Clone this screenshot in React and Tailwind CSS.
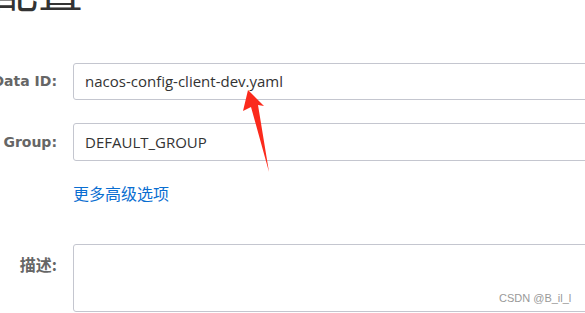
export default function App() {
  const font = { fontFamily: '"Open Sans", "Noto Sans CJK SC", sans-serif' }
  const cjk = { fontFamily: '"Noto Sans CJK SC", sans-serif' }
  const lbl = { fontFamily: '"DejaVu Sans", "Noto Sans CJK SC", sans-serif' }
  return (
    <div className="relative w-[585px] h-[313px] overflow-hidden bg-white" style={font}>
      <h1 className="-ml-[97px] -mt-[37px] h-[52px] text-[45px] leading-[52px] text-[#333] font-normal whitespace-nowrap" style={cjk}>
        新建配置
      </h1>

      <div className="-ml-[40px] mt-[48px] flex flex-col">
        <div className="flex items-center gap-[16px]">
          <label className="w-[97px] shrink-0 text-right text-[14px] font-bold text-[#666] whitespace-nowrap" style={lbl}>Data ID:</label>
          <div className="w-[600px] shrink-0 h-[37px] border border-[#c4c6cf] rounded-[3px] flex items-center px-[11px] text-[15px] text-[#333]">
            nacos-config-client-dev.yaml
          </div>
        </div>

        <div className="mt-[23px] flex items-center gap-[16px]">
          <label className="w-[97px] shrink-0 text-right text-[14px] font-bold text-[#666] whitespace-nowrap" style={lbl}>Group:</label>
          <div className="w-[600px] shrink-0 h-[38px] border border-[#c4c6cf] rounded-[3px] flex items-center px-[11px] text-[15px] text-[#333]">
            DEFAULT_GROUP
          </div>
        </div>

        <div className="mt-[21px] ml-[113px] h-[22px] text-[16px] leading-[22px] text-[#0a6ed1]" style={cjk}>
          更多高级选项
        </div>

        <div className="mt-[40px] flex items-start gap-[16px]">
          <label className="w-[97px] shrink-0 pt-[8px] text-right text-[16px] font-bold text-[#666] whitespace-nowrap" style={cjk}>描述:</label>
          <div className="w-[600px] shrink-0 h-[68px] border border-[#c4c6cf] rounded-[3px]" />
        </div>
      </div>

      <div className="absolute left-[499px] top-[290px] text-[11px] text-[#999]" style={{ fontFamily: '"Liberation Sans", sans-serif' }}>
        CSDN @B_il_l
      </div>

      <svg className="absolute left-0 top-0" width="585" height="313" viewBox="0 0 585 313">
        <polygon points="248,90 264,106 258,105 269,172 251,107 243,111" fill="#fb2a1c" />
      </svg>
    </div>
  )
}
